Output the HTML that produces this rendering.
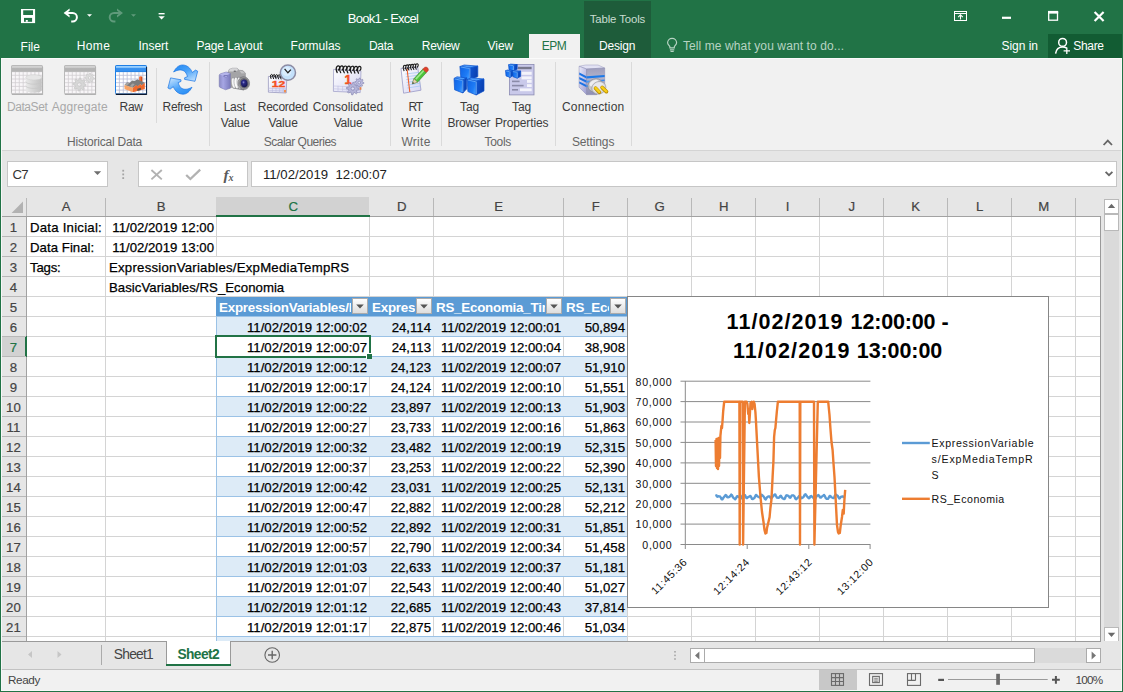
<!DOCTYPE html>
<html lang="en"><head><meta charset="utf-8"><title>Book1 - Excel</title>
<style>
html,body{margin:0;padding:0;background:#fff;}
body{width:1123px;height:692px;overflow:hidden;font-family:"Liberation Sans",sans-serif;}
#app{position:relative;width:1123px;height:692px;overflow:hidden;background:#e6e6e6;}
.t{position:absolute;white-space:pre;line-height:1;font-family:"Liberation Sans",sans-serif;}
.b{position:absolute;box-sizing:border-box;}
svg{position:absolute;overflow:visible;}
.cell{position:absolute;white-space:pre;overflow:hidden;line-height:20px;height:19px;padding-top:1px;font-size:13.2px;color:#000;box-sizing:border-box;-webkit-text-stroke-width:0.25px;}
.r{text-align:right;padding-right:2px;}
.l{text-align:left;padding-left:3px;letter-spacing:0.24px;}
.hd{position:absolute;line-height:1;font-size:13.2px;color:#444;text-align:center;}

</style></head>
<body>
<div id="app">
<div class="b" style="left:0px;top:0px;width:1123px;height:58px;background:#217346;"></div>
<div class="b" style="left:584px;top:1px;width:67px;height:57px;background:#1e5c3a;"></div>
<div class="b" style="left:529px;top:34px;width:51px;height:24px;background:#f1f1f1;"></div>
<div class="b" style="left:1048px;top:34px;width:74px;height:24px;background:#125c33;"></div>
<svg style="left:0;top:0" width="200" height="34" viewBox="0 0 200 34">
<rect x="21" y="9" width="14.100" height="14.100" fill="#fff"/>
<rect x="23.200" y="10.300" width="9.800" height="4.700" fill="#217346"/>
<rect x="24" y="17.900" width="8.100" height="3.900" fill="#217346"/>
<rect x="25.800" y="20" width="2" height="1.800" fill="#fff"/>
<g fill="none" stroke="#fff" stroke-width="2">
<path d="M66 13h6.600a4.300 4.300 0 0 1 0 8.600h-1.400"/>
</g>
<path d="M63.600 13l6-4.600v2.400l-3 2.200 3 2.200v2.400z" fill="#fff"/>
<path d="M87 14.2h5l-2.5 2.6z" fill="#fff"/>
<g fill="none" stroke="#5f9a7b" stroke-width="2">
<path d="M120.600 13h-6.600a4.300 4.300 0 0 0 0 8.600h1.400"/>
</g>
<path d="M123 13l-6-4.600v2.400l3 2.200-3 2.200v2.400z" fill="#5f9a7b"/>
<path d="M131 14.2h5l-2.5 2.6z" fill="#5f9a7b"/>
<rect x="158.6" y="13" width="6" height="1.4" fill="#fff"/>
<path d="M158.4 16.2h6.4l-3.2 3.2z" fill="#fff"/>
</svg>
<span class="t" style="left:347.80px;top:11px;font-size:13px;line-height:15px;color:#fff;font-weight:400;letter-spacing:-0.754px;">Book1 - Excel</span>
<span class="t" style="left:589.70px;top:13px;font-size:11.4px;line-height:12px;color:#c9ddd1;font-weight:400;letter-spacing:-0.121px;">Table Tools</span>
<span class="t" style="left:20.60px;top:40px;font-size:12px;line-height:14px;color:#fff;font-weight:400;letter-spacing:-0.034px;">File</span>
<span class="t" style="left:76.70px;top:39px;font-size:12px;line-height:14px;color:#fff;font-weight:400;letter-spacing:0.397px;">Home</span>
<span class="t" style="left:138.60px;top:39px;font-size:12px;line-height:14px;color:#fff;font-weight:400;letter-spacing:-0.069px;">Insert</span>
<span class="t" style="left:196.40px;top:39px;font-size:12px;line-height:14px;color:#fff;font-weight:400;letter-spacing:-0.126px;">Page Layout</span>
<span class="t" style="left:290.60px;top:39px;font-size:12px;line-height:14px;color:#fff;font-weight:400;letter-spacing:-0.001px;">Formulas</span>
<span class="t" style="left:368.90px;top:39px;font-size:12px;line-height:14px;color:#fff;font-weight:400;letter-spacing:-0.237px;">Data</span>
<span class="t" style="left:421.80px;top:39px;font-size:12px;line-height:14px;color:#fff;font-weight:400;letter-spacing:-0.291px;">Review</span>
<span class="t" style="left:487.60px;top:39px;font-size:12px;line-height:14px;color:#fff;font-weight:400;letter-spacing:-0.049px;">View</span>
<span class="t" style="left:541.80px;top:39px;font-size:12px;line-height:14px;color:#217346;font-weight:400;letter-spacing:-0.535px;">EPM</span>
<span class="t" style="left:598.90px;top:39px;font-size:12px;line-height:14px;color:#fff;font-weight:400;letter-spacing:-0.159px;">Design</span>
<span class="t" style="left:682.90px;top:39px;font-size:12px;line-height:14px;color:#b7d3c3;font-weight:400;letter-spacing:0.104px;">Tell me what you want to do...</span>
<span class="t" style="left:1001.50px;top:39px;font-size:12px;line-height:14px;color:#fff;font-weight:400;letter-spacing:-0.042px;">Sign in</span>
<span class="t" style="left:1073.30px;top:39px;font-size:12px;line-height:14px;color:#fff;font-weight:400;letter-spacing:-0.325px;">Share</span>
<svg style="left:0;top:0" width="1123" height="58" viewBox="0 0 1123 58">
<g fill="none" stroke="#b7d3c3" stroke-width="1.2">
<path d="M669.900 47.900v-.900c0-1.300-2.300-2.200-2.300-4.200a4.500 4.500 0 0 1 9 0c0 2-2.300 2.900-2.300 4.200v.900z"/>
<path d="M669.900 49.800h4.400M670.500 51.500h3.200"/>
</g>
<g fill="none" stroke="#fff" stroke-width="1.5">
<circle cx="1062.6" cy="42.4" r="3.9"/>
<path d="M1055.6 53.6c.6-4.2 3.2-6.6 7-6.6 1.6 0 3 .4 4 1.2"/>
<path d="M1066.8 47.6v6.4M1063.6 50.8h6.4" stroke-width="1.3"/>
</g>
<g fill="none" stroke="#fff">
<rect x="954.5" y="11.5" width="12" height="9" stroke-width="1"/>
<path d="M954.5 13.5h12" stroke-width="1"/>
<path d="M960.5 19.5v-4.2M958.2 17.2l2.3-2.3 2.3 2.3" stroke-width="1.1"/>
<path d="M1002 17.8h9" stroke-width="2.2"/>
<rect x="1048.7" y="12.6" width="8.8" height="7.6" stroke-width="1.3"/>
<path d="M1048 12.2h10.2" stroke-width="2.6"/>
<path d="M1094.6 12l9 9M1103.6 12l-9 9" stroke-width="2.2"/>
</g>
</svg>
<div class="b" style="left:0px;top:58px;width:1123px;height:92px;background:#f1f1f1;"></div>
<div class="b" style="left:0px;top:150px;width:1123px;height:1px;background:#d4d4d4;"></div>
<div class="b" style="left:0px;top:151px;width:1123px;height:46px;background:#e6e6e6;"></div>
<div class="b" style="left:7px;top:161px;width:101px;height:26px;background:#fff;border:1px solid #c6c6c6;"></div>
<div class="b" style="left:138px;top:161px;width:110px;height:26px;background:#fff;border:1px solid #c6c6c6;"></div>
<div class="b" style="left:251px;top:161px;width:866px;height:26px;background:#fff;border:1px solid #c6c6c6;"></div>
<span class="t" style="left:12.40px;top:167px;font-size:13.2px;line-height:15px;color:#333;font-weight:400;letter-spacing:-0.637px;">C7</span>
<span class="t" style="left:262.90px;top:167px;font-size:13.2px;line-height:15px;color:#222;font-weight:400;letter-spacing:0.020px;">11/02/2019  12:00:07</span>
<svg style="left:0;top:150" width="1123" height="47" viewBox="0 150 1123 47">
<path d="M93.800 171.200h7.400l-3.700 3.900z" fill="#6e6e6e"/>
<g fill="#a4a4a4"><rect x="122.300" y="169.800" width="1.800" height="1.800"/><rect x="122.300" y="173.500" width="1.800" height="1.800"/><rect x="122.300" y="177.200" width="1.800" height="1.800"/></g>
<path d="M151.400 170l10.400 9.400M161.800 170l-10.400 9.400" stroke="#b2b2b2" stroke-width="1.900" fill="none"/>
<path d="M186.200 175l4.200 4 9.800-9.400" stroke="#b2b2b2" stroke-width="2.300" fill="none"/>
<path d="M1105.6 171.8l3.4 3.4 3.4-3.4" stroke="#666" stroke-width="1.8" fill="none"/>
</svg>
<span class="t" style="left:223.5px;top:166.5px;font-family:'Liberation Serif',serif;font-style:italic;font-weight:700;font-size:15.5px;color:#5a5a5a;letter-spacing:-0.3px;">f<span style="font-size:10px;position:relative;top:1px;">x</span></span>
<div class="b" style="left:0px;top:0px;width:1px;height:692px;background:#217346;"></div>
<span class="t" style="left:6.90px;top:100px;font-size:12px;line-height:14px;color:#a9a9a9;font-weight:400;letter-spacing:-0.423px;">DataSet</span>
<span class="t" style="left:51.70px;top:100px;font-size:12px;line-height:14px;color:#a9a9a9;font-weight:400;letter-spacing:0.069px;">Aggregate</span>
<span class="t" style="left:119.60px;top:100px;font-size:12px;line-height:14px;color:#3b3b3b;font-weight:400;letter-spacing:-0.302px;">Raw</span>
<span class="t" style="left:162.60px;top:100px;font-size:12px;line-height:14px;color:#3b3b3b;font-weight:400;letter-spacing:-0.360px;">Refresh</span>
<span class="t" style="left:223.70px;top:100px;font-size:12px;line-height:14px;color:#3b3b3b;font-weight:400;letter-spacing:-0.245px;">Last</span>
<span class="t" style="left:220.80px;top:116px;font-size:12px;line-height:14px;color:#3b3b3b;font-weight:400;letter-spacing:-0.140px;">Value</span>
<span class="t" style="left:257.70px;top:100px;font-size:12px;line-height:14px;color:#3b3b3b;font-weight:400;letter-spacing:-0.217px;">Recorded</span>
<span class="t" style="left:268.50px;top:116px;font-size:12px;line-height:14px;color:#3b3b3b;font-weight:400;letter-spacing:-0.120px;">Value</span>
<span class="t" style="left:312.80px;top:100px;font-size:12px;line-height:14px;color:#3b3b3b;font-weight:400;letter-spacing:0.029px;">Consolidated</span>
<span class="t" style="left:333.70px;top:116px;font-size:12px;line-height:14px;color:#3b3b3b;font-weight:400;letter-spacing:-0.180px;">Value</span>
<span class="t" style="left:408.60px;top:100px;font-size:12px;line-height:14px;color:#3b3b3b;font-weight:400;letter-spacing:-1.290px;">RT</span>
<span class="t" style="left:401.40px;top:116px;font-size:12px;line-height:14px;color:#3b3b3b;font-weight:400;letter-spacing:0.364px;">Write</span>
<span class="t" style="left:460.00px;top:100px;font-size:12px;line-height:14px;color:#3b3b3b;font-weight:400;letter-spacing:-0.083px;">Tag</span>
<span class="t" style="left:447.40px;top:116px;font-size:12px;line-height:14px;color:#3b3b3b;font-weight:400;letter-spacing:-0.159px;">Browser</span>
<span class="t" style="left:512.10px;top:100px;font-size:12px;line-height:14px;color:#3b3b3b;font-weight:400;letter-spacing:-0.149px;">Tag</span>
<span class="t" style="left:494.90px;top:116px;font-size:12px;line-height:14px;color:#3b3b3b;font-weight:400;letter-spacing:-0.119px;">Properties</span>
<span class="t" style="left:562.00px;top:100px;font-size:12px;line-height:14px;color:#3b3b3b;font-weight:400;letter-spacing:0.159px;">Connection</span>
<span class="t" style="left:67.10px;top:135px;font-size:12px;line-height:14px;color:#666;font-weight:400;letter-spacing:-0.202px;">Historical Data</span>
<span class="t" style="left:263.80px;top:135px;font-size:12px;line-height:14px;color:#666;font-weight:400;letter-spacing:-0.505px;">Scalar Queries</span>
<span class="t" style="left:401.40px;top:135px;font-size:12px;line-height:14px;color:#666;font-weight:400;letter-spacing:0.284px;">Write</span>
<span class="t" style="left:484.60px;top:135px;font-size:12px;line-height:14px;color:#666;font-weight:400;letter-spacing:-0.323px;">Tools</span>
<span class="t" style="left:571.90px;top:135px;font-size:12px;line-height:14px;color:#666;font-weight:400;letter-spacing:-0.120px;">Settings</span>
<div class="b" style="left:209px;top:62px;width:1px;height:84px;background:#dadada;"></div>
<div class="b" style="left:390px;top:62px;width:1px;height:84px;background:#dadada;"></div>
<div class="b" style="left:441px;top:62px;width:1px;height:84px;background:#dadada;"></div>
<div class="b" style="left:555px;top:62px;width:1px;height:84px;background:#dadada;"></div>
<div class="b" style="left:631px;top:62px;width:1px;height:84px;background:#dadada;"></div>
<div class="b" style="left:156px;top:68px;width:1px;height:55px;background:#dadada;"></div>
<svg style="left:1100px;top:136px" width="16" height="12" viewBox="0 0 16 12"><path d="M3.6 9l4.2-4.4L12 9" fill="none" stroke="#666" stroke-width="1.8"/></svg>
<svg style="left:0;top:58px" width="1123" height="92" viewBox="0 58 1123 92">
<defs>
<linearGradient id="cf" x1="0" y1="0" x2="1" y2=".6"><stop offset="0" stop-color="#0f62e4"/><stop offset=".75" stop-color="#1e7cf6"/><stop offset="1" stop-color="#3c98ff"/></linearGradient>
<linearGradient id="cr" x1="0" y1="0" x2="1" y2=".4"><stop offset="0" stop-color="#1058d4"/><stop offset="1" stop-color="#0a40b0"/></linearGradient>
<linearGradient id="cyl" x1="0" y1="0" x2="1" y2="0"><stop offset="0" stop-color="#e9e9e9"/><stop offset=".5" stop-color="#d4d4d4"/><stop offset="1" stop-color="#c2c2c2"/></linearGradient>
<linearGradient id="rf" x1="0" y1="0" x2=".7" y2="1"><stop offset="0" stop-color="#2088f4"/><stop offset=".5" stop-color="#4aa2f8"/><stop offset="1" stop-color="#b4dafe"/></linearGradient>
<linearGradient id="rf2" x1="0" y1="1" x2="0" y2="0"><stop offset="0" stop-color="#1b86f2"/><stop offset="1" stop-color="#8fc8ff"/></linearGradient>
<radialGradient id="lens" cx=".42" cy=".36" r=".7"><stop offset="0" stop-color="#8c8cd8"/><stop offset=".3" stop-color="#2c2c86"/><stop offset="1" stop-color="#14144a"/></radialGradient>
<linearGradient id="grip" x1="0" y1="0" x2="1" y2="0"><stop offset="0" stop-color="#8a8ac4"/><stop offset=".35" stop-color="#a6a6e4"/><stop offset="1" stop-color="#7a7abc"/></linearGradient>
<linearGradient id="page" x1="0" y1="0" x2="1" y2="1"><stop offset="0" stop-color="#ffffff"/><stop offset="1" stop-color="#d4d4f2"/></linearGradient>
<linearGradient id="srvL" x1="0" y1="0" x2="1" y2="1"><stop offset="0" stop-color="#ecebfa"/><stop offset="1" stop-color="#9c9cd0"/></linearGradient>
<linearGradient id="srvF" x1="0" y1="0" x2="0" y2="1"><stop offset="0" stop-color="#9e9ebc"/><stop offset=".4" stop-color="#b4b4cc"/><stop offset="1" stop-color="#8e8eb4"/></linearGradient>
</defs>
<g transform="translate(11 65)"><defs><linearGradient id="ga" x1="0" y1="0" x2="0" y2="1"><stop offset="0" stop-color="#d2d2d2"/><stop offset=".28" stop-color="#d2d2d2"/><stop offset=".5" stop-color="#b4b4b4"/><stop offset="1" stop-color="#b4b4b4"/></linearGradient></defs><rect x="0.5" y="0.5" width="31" height="28.5" rx="1.2" fill="#f8f6f8" stroke="#b9b9b9"/><path d="M0.5 1.7a1.2 1.2 0 0 1 1.2-1.2h28.6a1.2 1.2 0 0 1 1.2 1.2V6.6H0.5z" fill="url(#ga)" stroke="#b9b9b9"/><path d="M4.4 7V28.5M8.3 7V28.5M12.2 7V28.5M16.1 7V28.5M20.0 7V28.5M23.9 7V28.5M27.8 7V28.5M1 10.3H31M1 14.0H31M1 17.7H31M1 21.4H31M1 25.1H31" stroke="#d2ced2" stroke-width="0.8" fill="none"/><path d="M0.8 29.3H31.4" stroke="#b0b0b0" stroke-width="1.4" fill="none"/><path d="M31.6 2V30" stroke="#b0b0b0" stroke-width="0.9" fill="none"/></g>
<path d="M25.8 77.4a8 2.6 0 0 1 16 0V90a8 2.8 0 0 1-16 0z" fill="url(#cyl)"/><ellipse cx="33.8" cy="77.4" rx="8" ry="2.6" fill="#e6e6e6" stroke="#cfcfcf" stroke-width=".5"/><path d="M25.8 81.6a8 2.6 0 0 0 16 0M25.8 85.8a8 2.6 0 0 0 16 0" fill="none" stroke="#c6c6c6" stroke-width=".7"/>
<g transform="translate(64 65)"><defs><linearGradient id="gb" x1="0" y1="0" x2="0" y2="1"><stop offset="0" stop-color="#d2d2d2"/><stop offset=".28" stop-color="#d2d2d2"/><stop offset=".5" stop-color="#b4b4b4"/><stop offset="1" stop-color="#b4b4b4"/></linearGradient></defs><rect x="0.5" y="0.5" width="31" height="28.5" rx="1.2" fill="#f8f6f8" stroke="#b9b9b9"/><path d="M0.5 1.7a1.2 1.2 0 0 1 1.2-1.2h28.6a1.2 1.2 0 0 1 1.2 1.2V6.6H0.5z" fill="url(#gb)" stroke="#b9b9b9"/><path d="M4.4 7V28.5M8.3 7V28.5M12.2 7V28.5M16.1 7V28.5M20.0 7V28.5M23.9 7V28.5M27.8 7V28.5M1 10.3H31M1 14.0H31M1 17.7H31M1 21.4H31M1 25.1H31" stroke="#d2ced2" stroke-width="0.8" fill="none"/><path d="M0.8 29.3H31.4" stroke="#b0b0b0" stroke-width="1.4" fill="none"/><path d="M31.6 2V30" stroke="#b0b0b0" stroke-width="0.9" fill="none"/></g>
<path d="M86.10,84.50 L85.97,85.79 L83.65,86.22 L83.23,86.99 L84.17,89.17 L83.17,89.99 L81.22,88.65 L80.38,88.90 L79.50,91.10 L78.21,90.97 L77.78,88.65 L77.01,88.23 L74.83,89.17 L74.01,88.17 L75.35,86.22 L75.10,85.38 L72.90,84.50 L73.03,83.21 L75.35,82.78 L75.77,82.01 L74.83,79.83 L75.83,79.01 L77.78,80.35 L78.62,80.10 L79.50,77.90 L80.79,78.03 L81.22,80.35 L81.99,80.77 L84.17,79.83 L84.99,80.83 L83.65,82.78 L83.90,83.62ZM81.30,84.50A1.80,1.80 0 1 0 77.70,84.50A1.80,1.80 0 1 0 81.30,84.50Z" fill="#d6d6d6" stroke="#c6c6c6" stroke-width="0.7" fill-rule="evenodd"/>
<path d="M94.40,78.00 L94.31,78.94 L92.62,79.25 L92.31,79.81 L92.99,81.39 L92.27,81.99 L90.85,81.02 L90.24,81.20 L89.60,82.80 L88.66,82.71 L88.35,81.02 L87.79,80.71 L86.21,81.39 L85.61,80.67 L86.58,79.25 L86.40,78.64 L84.80,78.00 L84.89,77.06 L86.58,76.75 L86.89,76.19 L86.21,74.61 L86.93,74.01 L88.35,74.98 L88.96,74.80 L89.60,73.20 L90.54,73.29 L90.85,74.98 L91.41,75.29 L92.99,74.61 L93.59,75.33 L92.62,76.75 L92.80,77.36ZM90.90,78.00A1.30,1.30 0 1 0 88.30,78.00A1.30,1.30 0 1 0 90.90,78.00Z" fill="#dcdcdc" stroke="#cacaca" stroke-width="0.7" fill-rule="evenodd"/>
<g transform="translate(115 65)"><defs><linearGradient id="gc" x1="0" y1="0" x2="0" y2="1"><stop offset="0" stop-color="#9ad0ff"/><stop offset=".28" stop-color="#9ad0ff"/><stop offset=".5" stop-color="#3690ef"/><stop offset="1" stop-color="#3690ef"/></linearGradient></defs><rect x="0.5" y="0.5" width="31" height="28.5" rx="1.2" fill="#ffffff" stroke="#1f7fe4"/><path d="M0.5 1.7a1.2 1.2 0 0 1 1.2-1.2h28.6a1.2 1.2 0 0 1 1.2 1.2V6.6H0.5z" fill="url(#gc)" stroke="#1f7fe4"/><path d="M4.4 7V28.5M8.3 7V28.5M12.2 7V28.5M16.1 7V28.5M20.0 7V28.5M23.9 7V28.5M27.8 7V28.5M1 10.3H31M1 14.0H31M1 17.7H31M1 21.4H31M1 25.1H31" stroke="#b9bdd6" stroke-width="0.8" fill="none"/><path d="M0.8 29.3H31.4" stroke="#0a1830" stroke-width="1.4" fill="none"/><path d="M31.6 2V30" stroke="#0a1830" stroke-width="0.9" fill="none"/></g>
<path d="M139.1 82.4v-5.300a1.550 .9 0 0 1 3.100 0v5.800z" fill="#f0703a"/><path d="M141 82.600v-5.600a.8 .8 0 0 1 1.200.1v5.800z" fill="#d8541e"/><path d="M124.500 84.900l2.600-2.600 2.400.7 2.700-2.500 2.600.6 2.400-1.900 7.600 3.600-3 2.700-1.400-1.300-3 2.600-1.400-1.400-3.200 2.400z" fill="#7c7c7c"/><path d="M124.500 84.900l2.600-2.600 2.400.7-2 2.500zM129.600 86.600l2.600-3.100 2.600.6-2.400 2.900z" fill="#a2a2a2"/><path d="M124.500 84.900l8.300 2.900v4.400l-8.300-3.100z" fill="#f8a465"/><path d="M132.800 87.800l3.700-2.900 1 1.600 2.900-2.400 1 1.400 3.400-2.700v6.300l-12 3.100z" fill="#ef6a2e"/><path d="M137.300 88.800l3.600-1v2.200l-3.600 1z" fill="#55504e"/>
<path d="M173.600 72C176 67.500 179 65 182.500 65C187 65 190.500 68 192.300 72.500L195.500 70.100L197.700 71.200L195 81.300L184.600 79.400L184.600 77.800L187.500 76.500C186.500 73.500 185.500 72 184.300 71.200C181.500 69.300 178 69.500 173.600 72Z" fill="url(#rf)" stroke="#1a74e4" stroke-width=".7" stroke-linejoin="round"/>
<path d="M173.600 72C176 67.500 179 65 182.500 65C187 65 190.500 68 192.300 72.500L195.500 70.100L197.700 71.200L195 81.300L184.600 79.400L184.600 77.800L187.500 76.500C186.500 73.500 185.500 72 184.300 71.200C181.500 69.300 178 69.500 173.600 72Z" fill="url(#rf)" stroke="#1a74e4" stroke-width=".7" stroke-linejoin="round" transform="rotate(180 182.800 79.600)"/>
<path d="M227.600 73.200l1.600-3.800 3.200-1.200h4.600l2.200 2 3.600.4 2.600 2.400v6l-6 8.400h-11.800z" fill="#a4a4a6" stroke="#8a8a8e" stroke-width=".5"/><path d="M229.400 69.600l2.800-1.300h4.600l1.600 1.600-3 1.500h-6.600z" fill="#d6d6d8"/><path d="M239.400 70.800l3.400.4 2.200 2-3.400.3z" fill="#c4c4c6"/><ellipse cx="234.800" cy="71.300" rx="1.300" ry=".8" fill="#6a6a6e"/><path d="M219.200 75.600q0-1.400 1.400-1.900l5.600-1.700 4.200 1.500v14.700l-4.800 1.600-5.600-2.400q-.8-.4-.8-1.400z" fill="url(#grip)" stroke="#7474aa" stroke-width=".5"/><path d="M219.600 74.600l6.600-2.400 4 1.500-6 2.500z" fill="#b4b4ea"/><ellipse cx="225.600" cy="76.100" rx="2.300" ry="1.200" fill="#7070b4"/><ellipse cx="225.900" cy="76.400" rx="1.500" ry=".7" fill="#a4a4de"/><path d="M233 77.600a3 6 0 0 0 0 11l11 1.800v-14z" fill="#8e8e92"/><ellipse cx="233.600" cy="83" rx="2.200" ry="5.300" fill="#f4f4f4" stroke="#8a8a8e" stroke-width=".5" transform="rotate(-8 233.600 83)"/><ellipse cx="236.400" cy="83" rx="2.300" ry="5.700" fill="#fafafa" stroke="#8a8a8e" stroke-width=".5" transform="rotate(-8 236.400 83)"/><ellipse cx="239.600" cy="83.100" rx="2.500" ry="6" fill="#f0f0f0" stroke="#86868a" stroke-width=".5" transform="rotate(-8 239.600 83.100)"/><ellipse cx="243.800" cy="83.200" rx="5.800" ry="6.400" fill="#9a9a9e" stroke="#6e6e72" stroke-width=".6" transform="rotate(-8 243.800 83.200)"/><ellipse cx="244.100" cy="83.200" rx="4.600" ry="5.200" fill="#6e6e74" transform="rotate(-8 244.100 83.200)"/><ellipse cx="244.200" cy="83.300" rx="3.300" ry="3.900" fill="url(#lens)" transform="rotate(-8 244.200 83.300)"/>
<path d="M268.400 76.400l18.400 1.200-.6 15.400-17.800-.8z" fill="url(#page)" stroke="#8f8fb8" stroke-width=".7"/><path d="M268.800 88.200l17.600.8M268.700 90.400l17.600.6M272.400 87.800v4.600M276 88v4.600M279.600 88.200v4.600M283.200 88.400v4.600" stroke="#b9b9dc" stroke-width=".6" fill="none"/><rect x="284" y="90" width="2" height="2.400" fill="#f09050"/><path d="M271.00 78.60q-1.18,-1.98 -0.31,-3.60q1.05,-1.18 1.80,-0.06q0.31,1.05 -0.68,2.05M273.50 78.70q-1.18,-1.98 -0.31,-3.60q1.05,-1.18 1.80,-0.06q0.31,1.05 -0.68,2.05M276.00 78.80q-1.18,-1.98 -0.31,-3.60q1.05,-1.18 1.80,-0.06q0.31,1.05 -0.68,2.05M278.50 78.90q-1.18,-1.98 -0.31,-3.60q1.05,-1.18 1.80,-0.06q0.31,1.05 -0.68,2.05M281.00 79.00q-1.18,-1.98 -0.31,-3.60q1.05,-1.18 1.80,-0.06q0.31,1.05 -0.68,2.05" stroke="#1a1a1a" stroke-width="1.0" fill="none" stroke-linecap="round"/><circle cx="287.900" cy="72.700" r="7.600" fill="#c4e1fb" stroke="#8c8ca4" stroke-width="1.500"/><circle cx="286.800" cy="71.400" r="4.600" fill="#e4f2ff" opacity=".7"/><path d="M284.600 68.800l3.300 4 3-3.200" stroke="#222" stroke-width="1.300" fill="none"/>
<text x="271.800" y="87.400" font-family="Liberation Sans, sans-serif" font-weight="700" font-size="8.800" fill="#f4511e" stroke="#f4511e" stroke-width=".35" textLength="13.400" lengthAdjust="spacingAndGlyphs">12</text>
<path d="M333.600 69.400l27.400 1.400-.8 21.800-26.800-1.200z" fill="url(#page)" stroke="#9a9ac4" stroke-width=".7"/><path d="M333.800 86l26.600 1.200M333.700 88.800l26.600 1.200M338 85.800v5.800M342.600 86v5.800M347 86.200v5.800" stroke="#c0c0e0" stroke-width=".6" fill="none"/><path d="M337.20 72.60q-1.90,-3.20 -0.50,-5.80q1.70,-1.90 2.90,-0.10q0.50,1.70 -1.10,3.30M340.75 72.70q-1.90,-3.20 -0.50,-5.80q1.70,-1.90 2.90,-0.10q0.50,1.70 -1.10,3.30M344.30 72.80q-1.90,-3.20 -0.50,-5.80q1.70,-1.90 2.90,-0.10q0.50,1.70 -1.10,3.30M347.85 72.90q-1.90,-3.20 -0.50,-5.80q1.70,-1.90 2.90,-0.10q0.50,1.70 -1.10,3.30M351.40 73.00q-1.90,-3.20 -0.50,-5.80q1.70,-1.90 2.90,-0.10q0.50,1.70 -1.10,3.30M354.95 73.10q-1.90,-3.20 -0.50,-5.80q1.70,-1.90 2.90,-0.10q0.50,1.70 -1.10,3.30M358.50 73.20q-1.90,-3.20 -0.50,-5.80q1.70,-1.90 2.90,-0.10q0.50,1.70 -1.10,3.30" stroke="#1a1a1a" stroke-width="1.2" fill="none" stroke-linecap="round"/>
<text x="344.400" y="83.800" font-family="Liberation Sans, sans-serif" font-weight="700" font-size="12.600" fill="#f4511e" stroke="#f4511e" stroke-width=".5">1</text>
<path d="M359.10,88.60 L358.98,89.83 L356.76,90.24 L356.36,90.98 L357.25,93.05 L356.30,93.84 L354.44,92.56 L353.64,92.80 L352.80,94.90 L351.57,94.78 L351.16,92.56 L350.42,92.16 L348.35,93.05 L347.56,92.10 L348.84,90.24 L348.60,89.44 L346.50,88.60 L346.62,87.37 L348.84,86.96 L349.24,86.22 L348.35,84.15 L349.30,83.36 L351.16,84.64 L351.96,84.40 L352.80,82.30 L354.03,82.42 L354.44,84.64 L355.18,85.04 L357.25,84.15 L358.04,85.10 L356.76,86.96 L357.00,87.76ZM354.50,88.60A1.70,1.70 0 1 0 351.10,88.60A1.70,1.70 0 1 0 354.50,88.60Z" fill="#b4b4d8" stroke="#8a8ab4" stroke-width="0.7" fill-rule="evenodd"/>
<path d="M363.90,82.60 L363.81,83.50 L362.19,83.80 L361.90,84.34 L362.55,85.85 L361.86,86.42 L360.50,85.49 L359.91,85.67 L359.30,87.20 L358.40,87.11 L358.10,85.49 L357.56,85.20 L356.05,85.85 L355.48,85.16 L356.41,83.80 L356.23,83.21 L354.70,82.60 L354.79,81.70 L356.41,81.40 L356.70,80.86 L356.05,79.35 L356.74,78.78 L358.10,79.71 L358.69,79.53 L359.30,78.00 L360.20,78.09 L360.50,79.71 L361.04,80.00 L362.55,79.35 L363.12,80.04 L362.19,81.40 L362.37,81.99ZM360.60,82.60A1.30,1.30 0 1 0 358.00,82.60A1.30,1.30 0 1 0 360.60,82.60Z" fill="#bcbce0" stroke="#8a8ab4" stroke-width="0.7" fill-rule="evenodd"/>
<rect x="359.600" y="87.200" width="1.800" height="2.600" fill="#e8824a"/>
<path d="M401 68.400l16.600-1.600 3.400 23.400-17.400 3z" fill="url(#page)" stroke="#8f8fc0" stroke-width=".7"/><path d="M405.400 74l13.400-1.600M405.800 76.800l13.400-1.700M406.200 79.600l13.400-1.800M406.600 82.400l13.400-1.900M407 85.200l13.400-2M407.400 88l13.400-2.100" stroke="#9cc4f4" stroke-width=".7" fill="none"/><path d="M407 68.200l2.800 23.800" stroke="#f0602a" stroke-width="1.100"/><path d="M404.00 70.60q-1.52,-2.56 -0.40,-4.64q1.36,-1.52 2.32,-0.08q0.40,1.36 -0.88,2.64M406.45 70.32q-1.52,-2.56 -0.40,-4.64q1.36,-1.52 2.32,-0.08q0.40,1.36 -0.88,2.64M408.90 70.04q-1.52,-2.56 -0.40,-4.64q1.36,-1.52 2.32,-0.08q0.40,1.36 -0.88,2.64M411.35 69.76q-1.52,-2.56 -0.40,-4.64q1.36,-1.52 2.32,-0.08q0.40,1.36 -0.88,2.64M413.80 69.48q-1.52,-2.56 -0.40,-4.64q1.36,-1.52 2.32,-0.08q0.40,1.36 -0.88,2.64M416.25 69.20q-1.52,-2.56 -0.40,-4.64q1.36,-1.52 2.32,-0.08q0.40,1.36 -0.88,2.64" stroke="#1a1a1a" stroke-width="1.1" fill="none" stroke-linecap="round"/>
<path d="M412.300 83.800l1.600-5 8.800-9.600 3.600 3.400-8.800 9.600z" fill="#4cc23a" stroke="#2a8a20" stroke-width=".6"/><path d="M415.200 78.600l8.400-9.200 1.300 1.200-8.500 9.200z" fill="#9be88a"/><path d="M412.300 83.800l1.600-5 3.600 3.400z" fill="#e8d2b0" stroke="#8a7a5a" stroke-width=".4"/><path d="M412.300 83.800l.6-1.800 1.300 1.200z" fill="#333"/><path d="M422.700 69.200l1.800-1.800a2.600 2.600 0 0 1 3.600 3.400l-1.800 1.800z" fill="#e0402a" stroke="#a82a1a" stroke-width=".5"/>
<path d="M459.9 66.5L469.9 68.0V80.2L460.8 77.2Z" fill="url(#cf)"/><path d="M469.9 68.0L477.8 66.1V76.6L469.9 80.2Z" fill="url(#cr)"/><path d="M459.9 66.5L464.2 65.0L477.8 66.1L469.9 68.0Z" fill="#4c9cfc"/><path d="M459.9 66.5L469.9 68.0V80.2L460.8 77.2ZM469.9 68.0L477.8 66.1V76.6L469.9 80.2ZM459.9 66.5L464.2 65.0L477.8 66.1L469.9 68.0Z" fill="none" stroke="#0c52cc" stroke-width="0.7" stroke-linejoin="round"/><path d="M469.9 68.3V79.3" stroke="#7cbcff" stroke-width="0.8"/><path d="M460.6 67.0L469.5 68.5" stroke="#6cb4ff" stroke-width="0.8"/>
<path d="M454.0 78.4L462.8 80.0V93.0L454.6 89.8Z" fill="url(#cf)"/><path d="M462.8 80.0L466.6 77.9V89.1L462.8 93.0Z" fill="url(#cr)"/><path d="M454.0 78.4L457.0 76.8L466.6 77.9L462.8 80.0Z" fill="#4c9cfc"/><path d="M454.0 78.4L462.8 80.0V93.0L454.6 89.8ZM462.8 80.0L466.6 77.9V89.1L462.8 93.0ZM454.0 78.4L457.0 76.8L466.6 77.9L462.8 80.0Z" fill="none" stroke="#0c52cc" stroke-width="0.7" stroke-linejoin="round"/><path d="M462.8 80.4V92.0" stroke="#7cbcff" stroke-width="0.8"/><path d="M454.5 78.9L462.4 80.5" stroke="#6cb4ff" stroke-width="0.8"/>
<path d="M467.1 79.5L476.2 81.2V95.0L467.9 91.6Z" fill="url(#cf)"/><path d="M476.2 81.2L484.0 79.0V90.9L476.2 95.0Z" fill="url(#cr)"/><path d="M467.1 79.5L471.2 77.8L484.0 79.0L476.2 81.2Z" fill="#4c9cfc"/><path d="M467.1 79.5L476.2 81.2V95.0L467.9 91.6ZM476.2 81.2L484.0 79.0V90.9L476.2 95.0ZM467.1 79.5L471.2 77.8L484.0 79.0L476.2 81.2Z" fill="none" stroke="#0c52cc" stroke-width="0.7" stroke-linejoin="round"/><path d="M476.2 81.6V94.0" stroke="#7cbcff" stroke-width="0.8"/><path d="M467.8 80.0L475.8 81.8" stroke="#6cb4ff" stroke-width="0.8"/>
<rect x="509.500" y="64.500" width="24.500" height="30.400" fill="#c9c9ea" stroke="#8a8ab2" stroke-width=".8"/><rect x="518" y="66.800" width="13.600" height="2.400" fill="#77778c"/><rect x="521.500" y="71.800" width="10.200" height="3" fill="#f4f4fb"/><rect x="521.500" y="76.400" width="10.200" height="3" fill="#f4f4fb"/><rect x="512" y="80.600" width="7.600" height="1.600" fill="#8a8aa8"/><rect x="527" y="80" width="4.700" height="2.800" fill="#f4f4fb"/><rect x="512" y="84.800" width="11.600" height="1.600" fill="#8a8aa8"/><rect x="527" y="84.200" width="4.700" height="2.800" fill="#f4f4fb"/><rect x="512" y="89" width="6" height="1.600" fill="#8a8aa8"/><rect x="520" y="88.400" width="11.700" height="2.800" fill="#f4f4fb"/>
<path d="M508.6 64.8L513.6 65.5V70.9L509.0 69.5Z" fill="url(#cf)"/><path d="M513.6 65.5L517.2 64.6V69.3L513.6 70.9Z" fill="url(#cr)"/><path d="M508.6 64.8L510.7 64.1L517.2 64.6L513.6 65.5Z" fill="#4c9cfc"/><path d="M508.6 64.8L513.6 65.5V70.9L509.0 69.5ZM513.6 65.5L517.2 64.6V69.3L513.6 70.9ZM508.6 64.8L510.7 64.1L517.2 64.6L513.6 65.5Z" fill="none" stroke="#0c52cc" stroke-width="0.7" stroke-linejoin="round"/><path d="M513.6 65.6V70.5" stroke="#7cbcff" stroke-width="0.8"/><path d="M508.9 65.0L513.2 65.7" stroke="#6cb4ff" stroke-width="0.8"/>
<path d="M505.6 70.7L510.0 71.5V77.4L506.0 75.9Z" fill="url(#cf)"/><path d="M510.0 71.5L513.2 70.5V75.6L510.0 77.4Z" fill="url(#cr)"/><path d="M505.6 70.7L507.4 70.0L513.2 70.5L510.0 71.5Z" fill="#4c9cfc"/><path d="M505.6 70.7L510.0 71.5V77.4L506.0 75.9ZM510.0 71.5L513.2 70.5V75.6L510.0 77.4ZM505.6 70.7L507.4 70.0L513.2 70.5L510.0 71.5Z" fill="none" stroke="#0c52cc" stroke-width="0.7" stroke-linejoin="round"/><path d="M510.0 71.6V77.0" stroke="#7cbcff" stroke-width="0.8"/><path d="M505.9 71.0L509.6 71.7" stroke="#6cb4ff" stroke-width="0.8"/>
<path d="M512.6 71.4L517.2 72.1V78.2L513.0 76.7Z" fill="url(#cf)"/><path d="M517.2 72.1L520.6 71.1V76.4L517.2 78.2Z" fill="url(#cr)"/><path d="M512.6 71.4L514.5 70.6L520.6 71.1L517.2 72.1Z" fill="#4c9cfc"/><path d="M512.6 71.4L517.2 72.1V78.2L513.0 76.7ZM517.2 72.1L520.6 71.1V76.4L517.2 78.2ZM512.6 71.4L514.5 70.6L520.6 71.1L517.2 72.1Z" fill="none" stroke="#0c52cc" stroke-width="0.7" stroke-linejoin="round"/><path d="M517.2 72.3V77.7" stroke="#7cbcff" stroke-width="0.8"/><path d="M512.9 71.6L516.8 72.3" stroke="#6cb4ff" stroke-width="0.8"/>
<path d="M579.100 66.300l6.400-1.300h12.500l6.700 3-18.100 1z" fill="#e2e2f4" stroke="#9a9abc" stroke-width=".5"/><path d="M579.100 66.300l7.500 2.700v25.700l-7.500-7.500z" fill="url(#srvL)" stroke="#8a8ab4" stroke-width=".5"/><path d="M586.600 69l18.100-1v17.400l-8 9.300h-10.100z" fill="url(#srvF)" stroke="#8a8ab0" stroke-width=".5"/><path d="M579.300 72.600l7.200 3.600v2.200l-7.200-3.600zM579.300 77l7.200 3.600v2.200l-7.200-3.600zM579.300 81.400l7.200 3.600v2.200l-7.200-3.600z" fill="#1a72e4"/><path d="M586.800 76.200l17.800-1.200v2l-17.800 1.400z" fill="#1c7ae8"/><path d="M596 80.200l8.600-.8v1.600l-8.600 1z" fill="#3a8cf0"/><path d="M586.800 80.800l3 -.2v2l-3 .2zM586.800 85.200l2-.1v2l-2 .1z" fill="#4a98f0"/><ellipse cx="595.400" cy="85.400" rx="7.600" ry="6.600" fill="#c4c4c8" stroke="#8a8a90" stroke-width=".6" transform="rotate(-20 595.400 85.400)"/><ellipse cx="594.200" cy="83.200" rx="5" ry="3" fill="#ededf0" transform="rotate(-25 594.200 83.200)"/><ellipse cx="598.800" cy="87.800" rx="7.200" ry="6.200" fill="#d8d8dc" stroke="#96969c" stroke-width=".6" transform="rotate(-20 598.800 87.800)"/><ellipse cx="598.400" cy="87" rx="5.600" ry="4.600" fill="#e8e8ec" transform="rotate(-20 598.400 87)"/><path d="M595.600 88.200l3.800 4" stroke="#b88a00" stroke-width="3.800" stroke-linecap="round"/><path d="M595.500 87.900l3.800 4" stroke="#f6cf18" stroke-width="2.400" stroke-linecap="round"/><path d="M602.200 87.600l4.200 4" stroke="#b88a00" stroke-width="3.800" stroke-linecap="round"/><path d="M602.100 87.300l4.200 4" stroke="#f6cf18" stroke-width="2.400" stroke-linecap="round"/>
</svg>
<div class="b" style="left:27px;top:217px;width:1074px;height:424px;background:#fff;"></div>
<div class="b" style="left:1px;top:197px;width:1100px;height:20px;background:#e6e6e6;"></div>
<div class="b" style="left:1px;top:217px;width:26px;height:424px;background:#e6e6e6;"></div>
<svg style="left:0px;top:197px" width="27" height="20" viewBox="0 0 27 20"><path d="M23 4.600v11.400H11.600z" fill="#b2b2b2"/></svg>
<div class="b" style="left:216px;top:197px;width:153px;height:19px;background:#d2d2d2;"></div>
<div class="b" style="left:216px;top:215px;width:154px;height:2px;background:#217346;"></div>
<div class="b" style="left:1px;top:337px;width:25px;height:19px;background:#d2d2d2;"></div>
<div class="b" style="left:25px;top:336px;width:2px;height:21px;background:#217346;"></div>
<span class="t" style="left:6.20px;width:120px;text-align:center;top:199px;font-size:13.2px;line-height:15px;color:#444;font-weight:400;letter-spacing:0px;-webkit-text-stroke-width:0.2px;">A</span>
<span class="t" style="left:101.20px;width:120px;text-align:center;top:199px;font-size:13.2px;line-height:15px;color:#444;font-weight:400;letter-spacing:0px;-webkit-text-stroke-width:0.2px;">B</span>
<span class="t" style="left:233.20px;width:120px;text-align:center;top:199px;font-size:13.2px;line-height:15px;color:#217346;font-weight:400;letter-spacing:0px;-webkit-text-stroke-width:0.2px;">C</span>
<span class="t" style="left:341.70px;width:120px;text-align:center;top:199px;font-size:13.2px;line-height:15px;color:#444;font-weight:400;letter-spacing:0px;-webkit-text-stroke-width:0.2px;">D</span>
<span class="t" style="left:438.70px;width:120px;text-align:center;top:199px;font-size:13.2px;line-height:15px;color:#444;font-weight:400;letter-spacing:0px;-webkit-text-stroke-width:0.2px;">E</span>
<span class="t" style="left:535.70px;width:120px;text-align:center;top:199px;font-size:13.2px;line-height:15px;color:#444;font-weight:400;letter-spacing:0px;-webkit-text-stroke-width:0.2px;">F</span>
<span class="t" style="left:599.70px;width:120px;text-align:center;top:199px;font-size:13.2px;line-height:15px;color:#444;font-weight:400;letter-spacing:0px;-webkit-text-stroke-width:0.2px;">G</span>
<span class="t" style="left:663.70px;width:120px;text-align:center;top:199px;font-size:13.2px;line-height:15px;color:#444;font-weight:400;letter-spacing:0px;-webkit-text-stroke-width:0.2px;">H</span>
<span class="t" style="left:727.70px;width:120px;text-align:center;top:199px;font-size:13.2px;line-height:15px;color:#444;font-weight:400;letter-spacing:0px;-webkit-text-stroke-width:0.2px;">I</span>
<span class="t" style="left:791.70px;width:120px;text-align:center;top:199px;font-size:13.2px;line-height:15px;color:#444;font-weight:400;letter-spacing:0px;-webkit-text-stroke-width:0.2px;">J</span>
<span class="t" style="left:855.70px;width:120px;text-align:center;top:199px;font-size:13.2px;line-height:15px;color:#444;font-weight:400;letter-spacing:0px;-webkit-text-stroke-width:0.2px;">K</span>
<span class="t" style="left:919.70px;width:120px;text-align:center;top:199px;font-size:13.2px;line-height:15px;color:#444;font-weight:400;letter-spacing:0px;-webkit-text-stroke-width:0.2px;">L</span>
<span class="t" style="left:983.70px;width:120px;text-align:center;top:199px;font-size:13.2px;line-height:15px;color:#444;font-weight:400;letter-spacing:0px;-webkit-text-stroke-width:0.2px;">M</span>
<div class="b" style="left:105px;top:198px;width:1px;height:18px;background:#b8b8b8;"></div>
<div class="b" style="left:433px;top:198px;width:1px;height:18px;background:#b8b8b8;"></div>
<div class="b" style="left:563px;top:198px;width:1px;height:18px;background:#b8b8b8;"></div>
<div class="b" style="left:627px;top:198px;width:1px;height:18px;background:#b8b8b8;"></div>
<div class="b" style="left:691px;top:198px;width:1px;height:18px;background:#b8b8b8;"></div>
<div class="b" style="left:755px;top:198px;width:1px;height:18px;background:#b8b8b8;"></div>
<div class="b" style="left:819px;top:198px;width:1px;height:18px;background:#b8b8b8;"></div>
<div class="b" style="left:883px;top:198px;width:1px;height:18px;background:#b8b8b8;"></div>
<div class="b" style="left:947px;top:198px;width:1px;height:18px;background:#b8b8b8;"></div>
<div class="b" style="left:1011px;top:198px;width:1px;height:18px;background:#b8b8b8;"></div>
<div class="b" style="left:1075px;top:198px;width:1px;height:18px;background:#b8b8b8;"></div>
<div class="b" style="left:26px;top:198px;width:1px;height:18px;background:#b8b8b8;"></div>
<div class="b" style="left:1px;top:216px;width:215px;height:1px;background:#a2a2a2;"></div>
<div class="b" style="left:370px;top:216px;width:731px;height:1px;background:#a2a2a2;"></div>
<div class="b" style="left:26px;top:217px;width:1px;height:119px;background:#a2a2a2;"></div>
<div class="b" style="left:26px;top:357px;width:1px;height:284px;background:#a2a2a2;"></div>
<span class="t" style="left:-46.60px;width:120px;text-align:center;top:220px;font-size:13.2px;line-height:15px;color:#444;font-weight:400;letter-spacing:0px;-webkit-text-stroke-width:0.2px;">1</span>
<div class="b" style="left:1px;top:236px;width:25px;height:1px;background:#b8b8b8;"></div>
<span class="t" style="left:-46.60px;width:120px;text-align:center;top:240px;font-size:13.2px;line-height:15px;color:#444;font-weight:400;letter-spacing:0px;-webkit-text-stroke-width:0.2px;">2</span>
<div class="b" style="left:1px;top:256px;width:25px;height:1px;background:#b8b8b8;"></div>
<span class="t" style="left:-46.60px;width:120px;text-align:center;top:260px;font-size:13.2px;line-height:15px;color:#444;font-weight:400;letter-spacing:0px;-webkit-text-stroke-width:0.2px;">3</span>
<div class="b" style="left:1px;top:276px;width:25px;height:1px;background:#b8b8b8;"></div>
<span class="t" style="left:-46.60px;width:120px;text-align:center;top:280px;font-size:13.2px;line-height:15px;color:#444;font-weight:400;letter-spacing:0px;-webkit-text-stroke-width:0.2px;">4</span>
<div class="b" style="left:1px;top:296px;width:25px;height:1px;background:#b8b8b8;"></div>
<span class="t" style="left:-46.60px;width:120px;text-align:center;top:300px;font-size:13.2px;line-height:15px;color:#444;font-weight:400;letter-spacing:0px;-webkit-text-stroke-width:0.2px;">5</span>
<div class="b" style="left:1px;top:316px;width:25px;height:1px;background:#b8b8b8;"></div>
<span class="t" style="left:-46.60px;width:120px;text-align:center;top:320px;font-size:13.2px;line-height:15px;color:#444;font-weight:400;letter-spacing:0px;-webkit-text-stroke-width:0.2px;">6</span>
<div class="b" style="left:1px;top:336px;width:25px;height:1px;background:#b8b8b8;"></div>
<span class="t" style="left:-46.60px;width:120px;text-align:center;top:340px;font-size:13.2px;line-height:15px;color:#217346;font-weight:400;letter-spacing:0px;-webkit-text-stroke-width:0.2px;">7</span>
<div class="b" style="left:1px;top:356px;width:25px;height:1px;background:#b8b8b8;"></div>
<span class="t" style="left:-46.60px;width:120px;text-align:center;top:360px;font-size:13.2px;line-height:15px;color:#444;font-weight:400;letter-spacing:0px;-webkit-text-stroke-width:0.2px;">8</span>
<div class="b" style="left:1px;top:376px;width:25px;height:1px;background:#b8b8b8;"></div>
<span class="t" style="left:-46.60px;width:120px;text-align:center;top:380px;font-size:13.2px;line-height:15px;color:#444;font-weight:400;letter-spacing:0px;-webkit-text-stroke-width:0.2px;">9</span>
<div class="b" style="left:1px;top:396px;width:25px;height:1px;background:#b8b8b8;"></div>
<span class="t" style="left:-46.60px;width:120px;text-align:center;top:400px;font-size:13.2px;line-height:15px;color:#444;font-weight:400;letter-spacing:0px;-webkit-text-stroke-width:0.2px;">10</span>
<div class="b" style="left:1px;top:416px;width:25px;height:1px;background:#b8b8b8;"></div>
<span class="t" style="left:-46.60px;width:120px;text-align:center;top:420px;font-size:13.2px;line-height:15px;color:#444;font-weight:400;letter-spacing:0px;-webkit-text-stroke-width:0.2px;">11</span>
<div class="b" style="left:1px;top:436px;width:25px;height:1px;background:#b8b8b8;"></div>
<span class="t" style="left:-46.60px;width:120px;text-align:center;top:440px;font-size:13.2px;line-height:15px;color:#444;font-weight:400;letter-spacing:0px;-webkit-text-stroke-width:0.2px;">12</span>
<div class="b" style="left:1px;top:456px;width:25px;height:1px;background:#b8b8b8;"></div>
<span class="t" style="left:-46.60px;width:120px;text-align:center;top:460px;font-size:13.2px;line-height:15px;color:#444;font-weight:400;letter-spacing:0px;-webkit-text-stroke-width:0.2px;">13</span>
<div class="b" style="left:1px;top:476px;width:25px;height:1px;background:#b8b8b8;"></div>
<span class="t" style="left:-46.60px;width:120px;text-align:center;top:480px;font-size:13.2px;line-height:15px;color:#444;font-weight:400;letter-spacing:0px;-webkit-text-stroke-width:0.2px;">14</span>
<div class="b" style="left:1px;top:496px;width:25px;height:1px;background:#b8b8b8;"></div>
<span class="t" style="left:-46.60px;width:120px;text-align:center;top:500px;font-size:13.2px;line-height:15px;color:#444;font-weight:400;letter-spacing:0px;-webkit-text-stroke-width:0.2px;">15</span>
<div class="b" style="left:1px;top:516px;width:25px;height:1px;background:#b8b8b8;"></div>
<span class="t" style="left:-46.60px;width:120px;text-align:center;top:520px;font-size:13.2px;line-height:15px;color:#444;font-weight:400;letter-spacing:0px;-webkit-text-stroke-width:0.2px;">16</span>
<div class="b" style="left:1px;top:536px;width:25px;height:1px;background:#b8b8b8;"></div>
<span class="t" style="left:-46.60px;width:120px;text-align:center;top:540px;font-size:13.2px;line-height:15px;color:#444;font-weight:400;letter-spacing:0px;-webkit-text-stroke-width:0.2px;">17</span>
<div class="b" style="left:1px;top:556px;width:25px;height:1px;background:#b8b8b8;"></div>
<span class="t" style="left:-46.60px;width:120px;text-align:center;top:560px;font-size:13.2px;line-height:15px;color:#444;font-weight:400;letter-spacing:0px;-webkit-text-stroke-width:0.2px;">18</span>
<div class="b" style="left:1px;top:576px;width:25px;height:1px;background:#b8b8b8;"></div>
<span class="t" style="left:-46.60px;width:120px;text-align:center;top:580px;font-size:13.2px;line-height:15px;color:#444;font-weight:400;letter-spacing:0px;-webkit-text-stroke-width:0.2px;">19</span>
<div class="b" style="left:1px;top:596px;width:25px;height:1px;background:#b8b8b8;"></div>
<span class="t" style="left:-46.60px;width:120px;text-align:center;top:600px;font-size:13.2px;line-height:15px;color:#444;font-weight:400;letter-spacing:0px;-webkit-text-stroke-width:0.2px;">20</span>
<div class="b" style="left:1px;top:616px;width:25px;height:1px;background:#b8b8b8;"></div>
<span class="t" style="left:-46.60px;width:120px;text-align:center;top:620px;font-size:13.2px;line-height:15px;color:#444;font-weight:400;letter-spacing:0px;-webkit-text-stroke-width:0.2px;">21</span>
<div class="b" style="left:1px;top:636px;width:25px;height:1px;background:#b8b8b8;"></div>
<div class="b" style="left:105px;top:217px;width:1px;height:424px;background:#d4d4d4;"></div>
<div class="b" style="left:216px;top:217px;width:1px;height:424px;background:#d4d4d4;"></div>
<div class="b" style="left:369px;top:217px;width:1px;height:424px;background:#d4d4d4;"></div>
<div class="b" style="left:433px;top:217px;width:1px;height:424px;background:#d4d4d4;"></div>
<div class="b" style="left:563px;top:217px;width:1px;height:424px;background:#d4d4d4;"></div>
<div class="b" style="left:627px;top:217px;width:1px;height:424px;background:#d4d4d4;"></div>
<div class="b" style="left:691px;top:217px;width:1px;height:424px;background:#d4d4d4;"></div>
<div class="b" style="left:755px;top:217px;width:1px;height:424px;background:#d4d4d4;"></div>
<div class="b" style="left:819px;top:217px;width:1px;height:424px;background:#d4d4d4;"></div>
<div class="b" style="left:883px;top:217px;width:1px;height:424px;background:#d4d4d4;"></div>
<div class="b" style="left:947px;top:217px;width:1px;height:424px;background:#d4d4d4;"></div>
<div class="b" style="left:1011px;top:217px;width:1px;height:424px;background:#d4d4d4;"></div>
<div class="b" style="left:1075px;top:217px;width:1px;height:424px;background:#d4d4d4;"></div>
<div class="b" style="left:27px;top:236px;width:1074px;height:1px;background:#d4d4d4;"></div>
<div class="b" style="left:27px;top:256px;width:1074px;height:1px;background:#d4d4d4;"></div>
<div class="b" style="left:27px;top:276px;width:1074px;height:1px;background:#d4d4d4;"></div>
<div class="b" style="left:27px;top:296px;width:1074px;height:1px;background:#d4d4d4;"></div>
<div class="b" style="left:27px;top:316px;width:1074px;height:1px;background:#d4d4d4;"></div>
<div class="b" style="left:27px;top:336px;width:1074px;height:1px;background:#d4d4d4;"></div>
<div class="b" style="left:27px;top:356px;width:1074px;height:1px;background:#d4d4d4;"></div>
<div class="b" style="left:27px;top:376px;width:1074px;height:1px;background:#d4d4d4;"></div>
<div class="b" style="left:27px;top:396px;width:1074px;height:1px;background:#d4d4d4;"></div>
<div class="b" style="left:27px;top:416px;width:1074px;height:1px;background:#d4d4d4;"></div>
<div class="b" style="left:27px;top:436px;width:1074px;height:1px;background:#d4d4d4;"></div>
<div class="b" style="left:27px;top:456px;width:1074px;height:1px;background:#d4d4d4;"></div>
<div class="b" style="left:27px;top:476px;width:1074px;height:1px;background:#d4d4d4;"></div>
<div class="b" style="left:27px;top:496px;width:1074px;height:1px;background:#d4d4d4;"></div>
<div class="b" style="left:27px;top:516px;width:1074px;height:1px;background:#d4d4d4;"></div>
<div class="b" style="left:27px;top:536px;width:1074px;height:1px;background:#d4d4d4;"></div>
<div class="b" style="left:27px;top:556px;width:1074px;height:1px;background:#d4d4d4;"></div>
<div class="b" style="left:27px;top:576px;width:1074px;height:1px;background:#d4d4d4;"></div>
<div class="b" style="left:27px;top:596px;width:1074px;height:1px;background:#d4d4d4;"></div>
<div class="b" style="left:27px;top:616px;width:1074px;height:1px;background:#d4d4d4;"></div>
<div class="b" style="left:27px;top:636px;width:1074px;height:1px;background:#d4d4d4;"></div>
<div class="b" style="left:216px;top:297px;width:411px;height:20px;background:#5b9bd5;"></div>
<div class="b" style="left:216px;top:316px;width:411px;height:21px;background:#ddebf7;"></div>
<div class="b" style="left:216px;top:356px;width:411px;height:21px;background:#ddebf7;"></div>
<div class="b" style="left:216px;top:396px;width:411px;height:21px;background:#ddebf7;"></div>
<div class="b" style="left:216px;top:436px;width:411px;height:21px;background:#ddebf7;"></div>
<div class="b" style="left:216px;top:476px;width:411px;height:21px;background:#ddebf7;"></div>
<div class="b" style="left:216px;top:516px;width:411px;height:21px;background:#ddebf7;"></div>
<div class="b" style="left:216px;top:556px;width:411px;height:21px;background:#ddebf7;"></div>
<div class="b" style="left:216px;top:596px;width:411px;height:21px;background:#ddebf7;"></div>
<div class="b" style="left:216px;top:636px;width:411px;height:5px;background:#ddebf7;"></div>
<div class="b" style="left:216px;top:316px;width:411px;height:1px;background:#9bc2e6;"></div>
<div class="b" style="left:216px;top:336px;width:411px;height:1px;background:#9bc2e6;"></div>
<div class="b" style="left:216px;top:356px;width:411px;height:1px;background:#9bc2e6;"></div>
<div class="b" style="left:216px;top:376px;width:411px;height:1px;background:#9bc2e6;"></div>
<div class="b" style="left:216px;top:396px;width:411px;height:1px;background:#9bc2e6;"></div>
<div class="b" style="left:216px;top:416px;width:411px;height:1px;background:#9bc2e6;"></div>
<div class="b" style="left:216px;top:436px;width:411px;height:1px;background:#9bc2e6;"></div>
<div class="b" style="left:216px;top:456px;width:411px;height:1px;background:#9bc2e6;"></div>
<div class="b" style="left:216px;top:476px;width:411px;height:1px;background:#9bc2e6;"></div>
<div class="b" style="left:216px;top:496px;width:411px;height:1px;background:#9bc2e6;"></div>
<div class="b" style="left:216px;top:516px;width:411px;height:1px;background:#9bc2e6;"></div>
<div class="b" style="left:216px;top:536px;width:411px;height:1px;background:#9bc2e6;"></div>
<div class="b" style="left:216px;top:556px;width:411px;height:1px;background:#9bc2e6;"></div>
<div class="b" style="left:216px;top:576px;width:411px;height:1px;background:#9bc2e6;"></div>
<div class="b" style="left:216px;top:596px;width:411px;height:1px;background:#9bc2e6;"></div>
<div class="b" style="left:216px;top:616px;width:411px;height:1px;background:#9bc2e6;"></div>
<div class="b" style="left:216px;top:636px;width:411px;height:1px;background:#9bc2e6;"></div>
<div class="b" style="left:216px;top:317px;width:1px;height:324px;background:#9bc2e6;"></div>
<div class="cell l" style="left:27px;top:217px;width:78px;">Data Inicial:</div>
<div class="cell r" style="left:106px;top:217px;width:110px;">11/02/2019 12:00</div>
<div class="cell l" style="left:27px;top:237px;width:78px;letter-spacing:0.05px;">Data Final:</div>
<div class="cell r" style="left:106px;top:237px;width:110px;">11/02/2019 13:00</div>
<div class="cell l" style="left:27px;top:257px;width:78px;letter-spacing:-0.2px;">Tags:</div>
<div class="cell l" style="left:106px;top:257px;width:110px;width:300px;background:linear-gradient(#fff,#fff) 110px 0/153px 19px no-repeat;">ExpressionVariables/ExpMediaTempRS</div>
<div class="cell l" style="left:106px;top:277px;width:110px;letter-spacing:0.04px;width:300px;background:linear-gradient(#fff,#fff) 110px 0/153px 19px no-repeat;">BasicVariables/RS_Economia</div>
<div class="cell l" style="left:217px;top:297px;width:134px;color:#fff;font-weight:700;font-size:13.4px;letter-spacing:-0.25px;padding-left:2px;-webkit-text-stroke-width:0;">ExpressionVariables/ExpMediaTempRS_Timestamp</div>
<svg style="left:352px;top:298px" width="16" height="16" viewBox="0 0 16 16"><defs><linearGradient id="fbC" x1="0" y1="0" x2="0" y2="1"><stop offset="0" stop-color="#ffffff"/><stop offset="1" stop-color="#dcdcdc"/></linearGradient></defs><rect x=".5" y=".5" width="15" height="15" fill="url(#fbC)" stroke="#ababab"/><path d="M4.2 6.4h7.6L8 10.4z" fill="#555"/></svg>
<div class="cell l" style="left:370px;top:297px;width:45px;color:#fff;font-weight:700;font-size:13.4px;letter-spacing:-0.25px;padding-left:2px;-webkit-text-stroke-width:0;">ExpressionVariables/ExpMediaTempRS</div>
<svg style="left:416px;top:298px" width="16" height="16" viewBox="0 0 16 16"><defs><linearGradient id="fbD" x1="0" y1="0" x2="0" y2="1"><stop offset="0" stop-color="#ffffff"/><stop offset="1" stop-color="#dcdcdc"/></linearGradient></defs><rect x=".5" y=".5" width="15" height="15" fill="url(#fbD)" stroke="#ababab"/><path d="M4.2 6.4h7.6L8 10.4z" fill="#555"/></svg>
<div class="cell l" style="left:434px;top:297px;width:111px;color:#fff;font-weight:700;font-size:13.4px;letter-spacing:-0.25px;padding-left:2px;-webkit-text-stroke-width:0;">RS_Economia_Timestamp</div>
<svg style="left:546px;top:298px" width="16" height="16" viewBox="0 0 16 16"><defs><linearGradient id="fbE" x1="0" y1="0" x2="0" y2="1"><stop offset="0" stop-color="#ffffff"/><stop offset="1" stop-color="#dcdcdc"/></linearGradient></defs><rect x=".5" y=".5" width="15" height="15" fill="url(#fbE)" stroke="#ababab"/><path d="M4.2 6.4h7.6L8 10.4z" fill="#555"/></svg>
<div class="cell l" style="left:564px;top:297px;width:45px;color:#fff;font-weight:700;font-size:13.4px;letter-spacing:-0.25px;padding-left:2px;-webkit-text-stroke-width:0;">RS_Economia</div>
<svg style="left:610px;top:298px" width="16" height="16" viewBox="0 0 16 16"><defs><linearGradient id="fbF" x1="0" y1="0" x2="0" y2="1"><stop offset="0" stop-color="#ffffff"/><stop offset="1" stop-color="#dcdcdc"/></linearGradient></defs><rect x=".5" y=".5" width="15" height="15" fill="url(#fbF)" stroke="#ababab"/><path d="M4.2 6.4h7.6L8 10.4z" fill="#555"/></svg>
<div class="cell r" style="left:217px;top:317px;width:152px;">11/02/2019 12:00:02</div>
<div class="cell r" style="left:370px;top:317px;width:63px;">24,114</div>
<div class="cell r" style="left:434px;top:317px;width:129px;">11/02/2019 12:00:01</div>
<div class="cell r" style="left:564px;top:317px;width:63px;">50,894</div>
<div class="cell r" style="left:217px;top:337px;width:152px;">11/02/2019 12:00:07</div>
<div class="cell r" style="left:370px;top:337px;width:63px;">24,113</div>
<div class="cell r" style="left:434px;top:337px;width:129px;">11/02/2019 12:00:04</div>
<div class="cell r" style="left:564px;top:337px;width:63px;">38,908</div>
<div class="cell r" style="left:217px;top:357px;width:152px;">11/02/2019 12:00:12</div>
<div class="cell r" style="left:370px;top:357px;width:63px;">24,123</div>
<div class="cell r" style="left:434px;top:357px;width:129px;">11/02/2019 12:00:07</div>
<div class="cell r" style="left:564px;top:357px;width:63px;">51,910</div>
<div class="cell r" style="left:217px;top:377px;width:152px;">11/02/2019 12:00:17</div>
<div class="cell r" style="left:370px;top:377px;width:63px;">24,124</div>
<div class="cell r" style="left:434px;top:377px;width:129px;">11/02/2019 12:00:10</div>
<div class="cell r" style="left:564px;top:377px;width:63px;">51,551</div>
<div class="cell r" style="left:217px;top:397px;width:152px;">11/02/2019 12:00:22</div>
<div class="cell r" style="left:370px;top:397px;width:63px;">23,897</div>
<div class="cell r" style="left:434px;top:397px;width:129px;">11/02/2019 12:00:13</div>
<div class="cell r" style="left:564px;top:397px;width:63px;">51,903</div>
<div class="cell r" style="left:217px;top:417px;width:152px;">11/02/2019 12:00:27</div>
<div class="cell r" style="left:370px;top:417px;width:63px;">23,733</div>
<div class="cell r" style="left:434px;top:417px;width:129px;">11/02/2019 12:00:16</div>
<div class="cell r" style="left:564px;top:417px;width:63px;">51,863</div>
<div class="cell r" style="left:217px;top:437px;width:152px;">11/02/2019 12:00:32</div>
<div class="cell r" style="left:370px;top:437px;width:63px;">23,482</div>
<div class="cell r" style="left:434px;top:437px;width:129px;">11/02/2019 12:00:19</div>
<div class="cell r" style="left:564px;top:437px;width:63px;">52,315</div>
<div class="cell r" style="left:217px;top:457px;width:152px;">11/02/2019 12:00:37</div>
<div class="cell r" style="left:370px;top:457px;width:63px;">23,253</div>
<div class="cell r" style="left:434px;top:457px;width:129px;">11/02/2019 12:00:22</div>
<div class="cell r" style="left:564px;top:457px;width:63px;">52,390</div>
<div class="cell r" style="left:217px;top:477px;width:152px;">11/02/2019 12:00:42</div>
<div class="cell r" style="left:370px;top:477px;width:63px;">23,031</div>
<div class="cell r" style="left:434px;top:477px;width:129px;">11/02/2019 12:00:25</div>
<div class="cell r" style="left:564px;top:477px;width:63px;">52,131</div>
<div class="cell r" style="left:217px;top:497px;width:152px;">11/02/2019 12:00:47</div>
<div class="cell r" style="left:370px;top:497px;width:63px;">22,882</div>
<div class="cell r" style="left:434px;top:497px;width:129px;">11/02/2019 12:00:28</div>
<div class="cell r" style="left:564px;top:497px;width:63px;">52,212</div>
<div class="cell r" style="left:217px;top:517px;width:152px;">11/02/2019 12:00:52</div>
<div class="cell r" style="left:370px;top:517px;width:63px;">22,892</div>
<div class="cell r" style="left:434px;top:517px;width:129px;">11/02/2019 12:00:31</div>
<div class="cell r" style="left:564px;top:517px;width:63px;">51,851</div>
<div class="cell r" style="left:217px;top:537px;width:152px;">11/02/2019 12:00:57</div>
<div class="cell r" style="left:370px;top:537px;width:63px;">22,790</div>
<div class="cell r" style="left:434px;top:537px;width:129px;">11/02/2019 12:00:34</div>
<div class="cell r" style="left:564px;top:537px;width:63px;">51,458</div>
<div class="cell r" style="left:217px;top:557px;width:152px;">11/02/2019 12:01:03</div>
<div class="cell r" style="left:370px;top:557px;width:63px;">22,633</div>
<div class="cell r" style="left:434px;top:557px;width:129px;">11/02/2019 12:00:37</div>
<div class="cell r" style="left:564px;top:557px;width:63px;">51,181</div>
<div class="cell r" style="left:217px;top:577px;width:152px;">11/02/2019 12:01:07</div>
<div class="cell r" style="left:370px;top:577px;width:63px;">22,543</div>
<div class="cell r" style="left:434px;top:577px;width:129px;">11/02/2019 12:00:40</div>
<div class="cell r" style="left:564px;top:577px;width:63px;">51,027</div>
<div class="cell r" style="left:217px;top:597px;width:152px;">11/02/2019 12:01:12</div>
<div class="cell r" style="left:370px;top:597px;width:63px;">22,685</div>
<div class="cell r" style="left:434px;top:597px;width:129px;">11/02/2019 12:00:43</div>
<div class="cell r" style="left:564px;top:597px;width:63px;">37,814</div>
<div class="cell r" style="left:217px;top:617px;width:152px;">11/02/2019 12:01:17</div>
<div class="cell r" style="left:370px;top:617px;width:63px;">22,875</div>
<div class="cell r" style="left:434px;top:617px;width:129px;">11/02/2019 12:00:46</div>
<div class="cell r" style="left:564px;top:617px;width:63px;">51,034</div>
<div class="b" style="left:215px;top:335px;width:156px;height:23px;border:2px solid #217346;"></div>
<div class="b" style="left:366px;top:353px;width:6px;height:6px;background:#fff;"></div>
<div class="b" style="left:367px;top:354px;width:5px;height:5px;background:#217346;"></div>
<div class="b" style="left:1100px;top:216px;width:1px;height:426px;background:#9a9a9a;"></div>
<div class="b" style="left:1px;top:641px;width:1100px;height:1px;background:#9a9a9a;"></div>
<div class="b" style="left:1101px;top:197px;width:20px;height:472px;background:#e6e6e6;"></div>
<div class="b" style="left:1104px;top:231px;width:15px;height:396px;background:#dadada;"></div>
<div class="b" style="left:1104px;top:199px;width:15px;height:15px;background:#fff;border:1px solid #b9b9b9;"></div>
<div class="b" style="left:1104px;top:214px;width:15px;height:17px;background:#fff;border:1px solid #b9b9b9;"></div>
<div class="b" style="left:1104px;top:627px;width:15px;height:15px;background:#fff;border:1px solid #b9b9b9;"></div>
<svg style="left:1104px;top:199px" width="15" height="15" viewBox="0 0 15 15"><path d="M3.800 9h7.400L7.500 4.700z" fill="#6a6a6a"/></svg>
<svg style="left:1104px;top:627px" width="15" height="15" viewBox="0 0 15 15"><path d="M3.800 5.800h7.400L7.500 10.100z" fill="#6a6a6a"/></svg>
<div class="b" style="left:627px;top:296px;width:422px;height:312px;background:#fff;border:1px solid #868686;"></div>
<svg style="left:0;top:0" width="1123" height="692" viewBox="0 0 1123 692">
<path d="M680.5 544.5H870.4" stroke="#8a8a8a" stroke-width="1" fill="none"/>
<path d="M680.5 524.1H870.4" stroke="#8a8a8a" stroke-width="1" fill="none"/>
<path d="M680.5 503.7H870.4" stroke="#8a8a8a" stroke-width="1" fill="none"/>
<path d="M680.5 483.3H870.4" stroke="#8a8a8a" stroke-width="1" fill="none"/>
<path d="M680.5 462.9H870.4" stroke="#8a8a8a" stroke-width="1" fill="none"/>
<path d="M680.5 442.4H870.4" stroke="#8a8a8a" stroke-width="1" fill="none"/>
<path d="M680.5 422.0H870.4" stroke="#8a8a8a" stroke-width="1" fill="none"/>
<path d="M680.5 401.6H870.4" stroke="#8a8a8a" stroke-width="1" fill="none"/>
<path d="M680.5 381.2H870.4" stroke="#8a8a8a" stroke-width="1" fill="none"/>
<path d="M685.3 381V549" stroke="#8a8a8a" stroke-width="1" fill="none"/>
<path d="M747.2 544.5V549" stroke="#8a8a8a" stroke-width="1" fill="none"/>
<path d="M808.8 544.5V549" stroke="#8a8a8a" stroke-width="1" fill="none"/>
<path d="M870.1 544.5V549" stroke="#8a8a8a" stroke-width="1" fill="none"/>
<path d="M716.0,494.4 L716.8,496.4 L717.6,496.7 L718.4,496.2 L719.2,496.4 L720.0,496.5 L720.8,497.6 L721.6,499.3 L722.4,499.3 L723.2,498.0 L724.0,497.0 L724.8,496.1 L725.6,495.0 L726.4,495.5 L727.2,497.1 L728.0,497.4 L728.8,497.0 L729.6,496.8 L730.4,495.8 L731.2,494.6 L732.0,495.2 L732.8,497.0 L733.6,498.0 L734.4,498.6 L735.2,499.2 L736.0,498.2 L736.8,496.4 L737.6,496.2 L738.4,496.8 L739.2,497.1 L740.0,497.8 L740.8,498.6 L741.6,497.5 L742.4,495.6 L743.2,495.0 L744.0,494.9 L744.8,494.9 L745.6,496.4 L746.4,498.1 L747.2,498.0 L748.0,497.2 L748.8,496.9 L749.6,496.3 L750.4,495.9 L751.2,497.2 L752.0,498.9 L752.8,499.0 L753.6,498.5 L754.4,498.0 L755.2,496.3 L756.0,494.9 L756.8,495.4 L757.6,496.5 L758.4,496.8 L759.2,497.3 L760.0,497.5 L760.8,496.1 L761.6,494.8 L762.4,495.3 L763.2,496.2 L764.0,497.0 L764.8,498.6 L765.6,499.5 L766.4,498.4 L767.2,497.0 L768.0,496.7 L768.8,496.4 L769.6,496.4 L770.4,497.7 L771.2,498.6 L772.0,497.6 L772.8,496.5 L773.6,495.7 L774.4,494.6 L775.2,494.4 L776.0,496.0 L776.8,497.5 L777.6,497.7 L778.4,497.8 L779.2,497.6 L780.0,496.3 L780.8,495.7 L781.6,497.0 L782.4,498.2 L783.2,498.6 L784.0,499.1 L784.8,498.7 L785.6,496.7 L786.4,495.3 L787.2,495.5 L788.0,495.7 L788.8,496.2 L789.6,497.5 L790.4,497.7 L791.2,496.3 L792.0,495.4 L792.8,495.4 L793.6,495.5 L794.4,496.3 L795.2,498.4 L796.0,499.3 L796.8,498.6 L797.6,497.9 L798.4,497.2 L799.2,496.0 L800.0,496.0 L800.8,497.5 L801.6,498.2 L802.4,497.7 L803.2,497.4 L804.0,496.3 L804.8,494.6 L805.6,494.3 L806.4,495.6 L807.2,496.6 L808.0,497.4 L808.8,498.3 L809.6,498.0 L810.4,496.4 L811.2,496.0 L812.0,496.7 L812.8,497.2 L813.6,498.1 L814.4,499.4 L815.2,499.0 L816.0,497.2 L816.8,496.1 L817.6,495.6 L818.4,495.0 L819.2,495.8 L820.0,497.4 L820.8,497.6 L821.6,496.7 L822.4,496.2 L823.2,495.6 L824.0,494.9 L824.8,495.9 L825.6,497.9 L826.4,498.7 L827.2,498.8 L828.0,498.8 L828.8,497.6 L829.6,496.0 L830.4,496.0 L831.2,497.1 L832.0,497.5 L832.8,497.8 L833.6,498.1 L834.4,496.8 L835.2,494.9 L836.0,494.6 L836.8,495.2 L837.6,495.7 L838.4,497.1 L839.2,498.5 L840.0,498.1 L840.8,496.9 L841.6,496.6 L842.4,496.5 L843.2,496.4 L844.0,497.8" stroke="#5b9bd5" stroke-width="2.4" fill="none" stroke-linejoin="round"/>
<path d="M715.6,440.0 L716.0,466.0 L716.5,439.0 L717.0,468.0 L717.5,441.0 L718.0,469.0 L718.5,438.0 L719.0,466.0 L719.5,440.0 L720.0,458.0 L720.4,436.0 L720.8,432.0 L721.4,426.0 L722.0,428.0 L722.6,420.0 L723.2,411.0 L724.2,401.7 L739.4,401.7 L739.7,544.5 L740.0,401.7 L742.7,401.7 L743.1,544.5 L744.9,401.7 L746.6,401.7 L747.4,404.0 L748.2,414.0 L748.7,409.0 L749.3,423.0 L749.9,414.0 L750.5,403.0 L751.6,401.7 L752.3,409.0 L752.9,404.0 L753.7,401.7 L754.6,404.0 L755.4,412.0 L755.9,420.0 L757.2,445.0 L758.9,477.0 L760.5,497.0 L762.0,512.0 L763.5,522.0 L764.5,530.0 L765.4,533.5 L766.4,533.0 L767.0,528.0 L768.0,524.0 L769.6,517.0 L770.4,508.0 L771.4,500.0 L772.0,489.0 L772.6,477.0 L773.4,462.0 L774.1,437.0 L774.8,430.0 L775.4,428.0 L775.9,422.0 L776.8,412.0 L777.9,401.7 L799.7,401.7 L800.0,544.5 L800.3,401.7 L814.0,401.7 L814.4,544.5 L817.8,401.7 L828.2,401.7 L829.0,410.0 L829.5,415.0 L830.4,428.0 L831.5,442.0 L832.6,450.0 L833.4,462.0 L834.5,477.0 L835.7,500.0 L837.0,525.0 L838.0,532.0 L838.7,533.5 L839.8,533.0 L840.6,526.0 L842.0,517.0 L842.8,510.0 L843.7,513.6 L844.4,500.0 L845.2,489.9" stroke="#ed7d31" stroke-width="2.4" fill="none" stroke-linejoin="round"/>
<path d="M902 443H929.8" stroke="#5b9bd5" stroke-width="2.4"/>
<path d="M902 498.8H929.8" stroke="#ed7d31" stroke-width="2.4"/>
<text x="687.9" y="562.7" transform="rotate(-45 687.9 562.7)" text-anchor="end" font-family="Liberation Sans, sans-serif" font-size="10.6" letter-spacing="0.65" fill="#111">11:45:36</text>
<text x="750.4" y="562.7" transform="rotate(-45 750.4 562.7)" text-anchor="end" font-family="Liberation Sans, sans-serif" font-size="10.6" letter-spacing="0.65" fill="#111">12:14:24</text>
<text x="812.9" y="562.7" transform="rotate(-45 812.9 562.7)" text-anchor="end" font-family="Liberation Sans, sans-serif" font-size="10.6" letter-spacing="0.65" fill="#111">12:43:12</text>
<text x="874.2" y="562.7" transform="rotate(-45 874.2 562.7)" text-anchor="end" font-family="Liberation Sans, sans-serif" font-size="10.6" letter-spacing="0.65" fill="#111">13:12:00</text>
</svg>
<span class="t" style="left:726.60px;top:310px;font-size:21.5px;line-height:24px;color:#000;font-weight:700;letter-spacing:1.058px;">11/02/2019</span>
<span class="t" style="left:850.60px;top:310px;font-size:21.5px;line-height:24px;color:#000;font-weight:700;letter-spacing:-0.171px;">12:00:00</span>
<span class="t" style="left:941.40px;top:310px;font-size:21.5px;line-height:24px;color:#000;font-weight:700;letter-spacing:0.039px;">-</span>
<span class="t" style="left:732.90px;top:339px;font-size:21.5px;line-height:24px;color:#000;font-weight:700;letter-spacing:1.118px;">11/02/2019</span>
<span class="t" style="left:856.80px;top:339px;font-size:21.5px;line-height:24px;color:#000;font-weight:700;letter-spacing:-0.083px;">13:00:00</span>
<span class="t" style="left:642.30px;top:539px;font-size:10.6px;line-height:12px;color:#111;font-weight:400;letter-spacing:0.735px;">0,000</span>
<span class="t" style="left:635.60px;top:518px;font-size:10.6px;line-height:12px;color:#111;font-weight:400;letter-spacing:0.746px;">10,000</span>
<span class="t" style="left:635.60px;top:498px;font-size:10.6px;line-height:12px;color:#111;font-weight:400;letter-spacing:0.746px;">20,000</span>
<span class="t" style="left:635.60px;top:478px;font-size:10.6px;line-height:12px;color:#111;font-weight:400;letter-spacing:0.746px;">30,000</span>
<span class="t" style="left:635.60px;top:457px;font-size:10.6px;line-height:12px;color:#111;font-weight:400;letter-spacing:0.746px;">40,000</span>
<span class="t" style="left:635.60px;top:437px;font-size:10.6px;line-height:12px;color:#111;font-weight:400;letter-spacing:0.746px;">50,000</span>
<span class="t" style="left:635.60px;top:416px;font-size:10.6px;line-height:12px;color:#111;font-weight:400;letter-spacing:0.746px;">60,000</span>
<span class="t" style="left:635.60px;top:396px;font-size:10.6px;line-height:12px;color:#111;font-weight:400;letter-spacing:0.746px;">70,000</span>
<span class="t" style="left:635.60px;top:376px;font-size:10.6px;line-height:12px;color:#111;font-weight:400;letter-spacing:0.746px;">80,000</span>
<span class="t" style="left:931.50px;top:437px;font-size:10.6px;line-height:12px;color:#111;font-weight:400;letter-spacing:0.686px;">ExpressionVariable</span>
<span class="t" style="left:931.50px;top:453px;font-size:10.6px;line-height:12px;color:#111;font-weight:400;letter-spacing:0.876px;">s/ExpMediaTempR</span>
<span class="t" style="left:931.50px;top:469px;font-size:10.6px;line-height:12px;color:#111;font-weight:400;letter-spacing:-0.771px;">S</span>
<span class="t" style="left:931.50px;top:493px;font-size:10.6px;line-height:12px;color:#111;font-weight:400;letter-spacing:0.504px;">RS_Economia</span>
<div class="b" style="left:1px;top:642px;width:1100px;height:27px;background:#e6e6e6;"></div>
<div class="b" style="left:1101px;top:641px;width:20px;height:28px;background:#e6e6e6;"></div>
<div class="b" style="left:167px;top:641px;width:64px;height:23px;background:#fff;"></div>
<div class="b" style="left:166px;top:664px;width:65px;height:2px;background:#217346;"></div>
<div class="b" style="left:166px;top:641px;width:1px;height:23px;background:#9a9a9a;"></div>
<div class="b" style="left:230px;top:641px;width:1px;height:23px;background:#9a9a9a;"></div>
<div class="b" style="left:101px;top:645px;width:1px;height:20px;background:#ababab;"></div>
<span class="t" style="left:113.80px;top:647px;font-size:13.8px;line-height:15px;color:#444;font-weight:400;letter-spacing:-0.757px;">Sheet1</span>
<span class="t" style="left:177.40px;top:647px;font-size:13.8px;line-height:15px;color:#217346;font-weight:700;letter-spacing:-0.576px;">Sheet2</span>
<svg style="left:0;top:641px" width="1123" height="28" viewBox="0 641 1123 28">
<path d="M32 651v7l-4-3.5z" fill="#c6c6c6"/><path d="M57.5 651v7l4-3.5z" fill="#c6c6c6"/>
<circle cx="272.2" cy="655" r="7.3" fill="none" stroke="#666" stroke-width="1.1"/>
<path d="M268 655h8.4M272.2 650.8v8.4" stroke="#666" stroke-width="1.4"/>
<g fill="#a6a6a6"><rect x="674.2" y="651" width="1.6" height="1.6"/><rect x="674.2" y="654.6" width="1.6" height="1.6"/><rect x="674.2" y="658.2" width="1.6" height="1.6"/></g>
</svg>
<div class="b" style="left:690px;top:648px;width:411px;height:15px;background:#dadada;"></div>
<div class="b" style="left:690px;top:648px;width:15px;height:15px;background:#fff;border:1px solid #ababab;"></div>
<div class="b" style="left:704px;top:648px;width:331px;height:15px;background:#fff;border:1px solid #ababab;"></div>
<div class="b" style="left:1086px;top:648px;width:15px;height:15px;background:#fff;border:1px solid #ababab;"></div>
<svg style="left:690px;top:648px" width="15" height="15" viewBox="0 0 15 15"><path d="M9.4 3.6v7.8L5 7.5z" fill="#777"/></svg>
<svg style="left:1086px;top:648px" width="15" height="15" viewBox="0 0 15 15"><path d="M5.6 3.6v7.8L10 7.5z" fill="#777"/></svg>
<div class="b" style="left:1px;top:669px;width:1121px;height:21px;background:#f1f1f1;border-top:1px solid #c2c2c2;"></div>
<span class="t" style="left:8.00px;top:673px;font-size:11.7px;line-height:13px;color:#444;font-weight:400;letter-spacing:-0.384px;">Ready</span>
<span class="t" style="left:1075.40px;top:673px;font-size:11.7px;line-height:13px;color:#444;font-weight:400;letter-spacing:-0.731px;">100%</span>
<div class="b" style="left:819px;top:670px;width:38px;height:20px;background:#c8c8c8;"></div>
<svg style="left:0;top:669px" width="1123" height="23" viewBox="0 669 1123 23">
<g fill="none" stroke="#6a6a6a" stroke-width="1.1">
<rect x="831.5" y="673.6" width="12" height="11.800"/><path d="M831.500 677.600h12M831.500 681.500h12M835.500 673.600v11.800M839.500 673.600v11.800"/>
<rect x="869.500" y="673.600" width="13" height="11.800"/><rect x="872.700" y="676.400" width="6.600" height="6.200"/><path d="M874.200 678.300h3.600M874.200 679.900h3.600M874.200 681.300h3.600" stroke-width=".8"/>
<rect x="907.500" y="673.600" width="13" height="11.800"/><path d="M911.500 673.600v6.800M915.500 673.600v6.800M907.500 680.400h8v0" />
</g>
<path d="M938.2 679.900h5.800" stroke="#555" stroke-width="2.200"/>
<path d="M948 679.500h99.700" stroke="#9a9a9a" stroke-width="1"/>
<rect x="996.200" y="673.800" width="3.700" height="11" fill="#6a6a6a"/>
<path d="M1052 679.800h7.800M1055.900 675.900v7.800" stroke="#555" stroke-width="2"/>
</svg>
<div class="b" style="left:1121px;top:58px;width:1px;height:633px;background:#f7f7f7;"></div>
<div class="b" style="left:1px;top:58px;width:1px;height:633px;background:#f7f7f7;"></div>
<div class="b" style="left:1px;top:58px;width:1121px;height:1px;background:#fbfbfb;"></div>
<div class="b" style="left:1122px;top:0px;width:1px;height:692px;background:#217346;"></div>
<div class="b" style="left:1px;top:690px;width:1121px;height:1px;background:#f9f9f9;"></div>
<div class="b" style="left:0px;top:691px;width:1123px;height:1px;background:#217346;"></div>
<div class="b" style="left:0px;top:0px;width:1px;height:692px;background:#217346;"></div>
</div>
</body></html>
